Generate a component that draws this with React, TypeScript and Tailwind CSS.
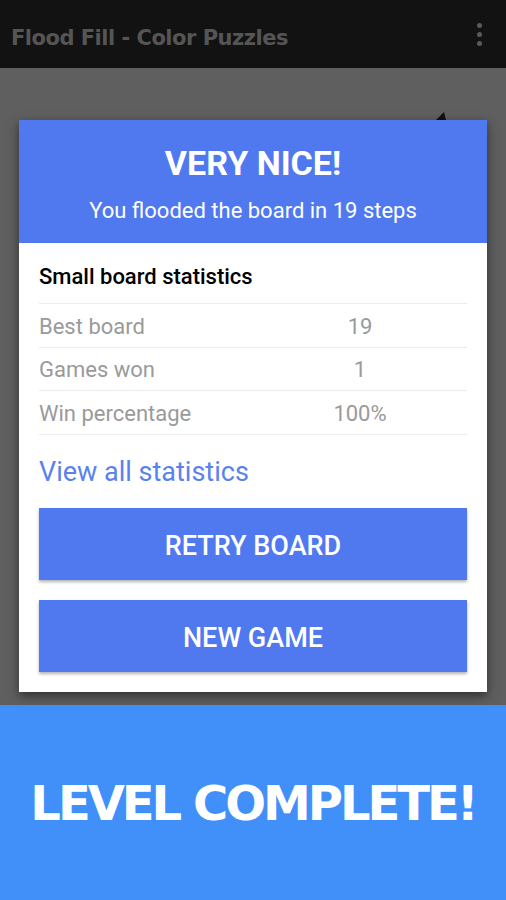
import React from 'react';

const stats = [
  { label: 'Best board', value: '19' },
  { label: 'Games won', value: '1' },
  { label: 'Win percentage', value: '100%' },
];

const App: React.FC = () => {
  return (
    <div className="w-[506px] h-[900px] flex flex-col overflow-hidden bg-[#5f5f5f] font-['Roboto',sans-serif]">
      {/* app bar */}
      <div className="h-[68px] shrink-0 bg-[#121212] flex items-center justify-between pl-[11px] pr-[24px]">
        <span className="mt-[10px] text-[21px] font-bold text-[#555555] tracking-[-0.5px] font-['DejaVu_Sans',sans-serif]">
          Flood Fill - Color Puzzles
        </span>
        <div className="flex flex-col gap-[4px]">
          <div className="w-[5px] h-[5px] rounded-full bg-[#5a5a5a]" />
          <div className="w-[5px] h-[5px] rounded-full bg-[#5a5a5a]" />
          <div className="w-[5px] h-[5px] rounded-full bg-[#5a5a5a]" />
        </div>
      </div>

      {/* dimmed game area with dialog */}
      <div className="relative flex-1 px-[19px] pt-[52px]">
        <svg className="absolute left-[434px] top-[42px]" width="20" height="12" viewBox="0 0 20 12">
          <path d="M2 10 L10 2 L12 10 Z" fill="#111" />
        </svg>
        <div className="relative bg-white w-[468px] shadow-[0_4px_10px_rgba(0,0,0,0.5)]">
          <div className="bg-[#5079ef] h-[123px] flex flex-col items-center pt-[24px]">
            <div className="text-white text-[34px] font-bold leading-[38px]">VERY NICE!</div>
            <div className="text-white text-[22px] leading-[26px] mt-[16px]">You flooded the board in 19 steps</div>
          </div>
          <div className="px-[20px] pt-[22px] pb-[20px]">
            <div className="text-[22px] font-medium text-black leading-[24px] mb-[14px]">Small board statistics</div>
            <div className="border-t border-[#ececec]">
              {stats.map(s => (
                <div key={s.label} className="flex h-[43.5px] items-center pt-[2px] border-b border-[#ececec] text-[22px] text-[#9a9a9a]">
                  <span className="w-[282px]">{s.label}</span>
                  <span className="w-[78px] text-center">{s.value}</span>
                </div>
              ))}
            </div>
            <div className="text-[27px] text-[#5a82ee] leading-[30px] mt-[22px]">View all statistics</div>
            <button className="w-full h-[72px] mt-[21px] pt-[5px] bg-[#5079ef] text-white text-[27px] font-medium shadow-[0_2px_3px_rgba(0,0,0,0.3)]">
              RETRY BOARD
            </button>
            <button className="w-full h-[72px] mt-[20px] pt-[5px] bg-[#5079ef] text-white text-[27px] font-medium shadow-[0_2px_3px_rgba(0,0,0,0.3)]">
              NEW GAME
            </button>
          </div>
        </div>
      </div>

      {/* promo banner */}
      <div className="h-[195px] shrink-0 bg-[#4190fa] flex items-center justify-center">
        <span className="text-white text-[48px] font-bold tracking-[-3px] font-['DejaVu_Sans',sans-serif]">
          LEVEL COMPLETE!
        </span>
      </div>
    </div>
  );
};

export default App;
